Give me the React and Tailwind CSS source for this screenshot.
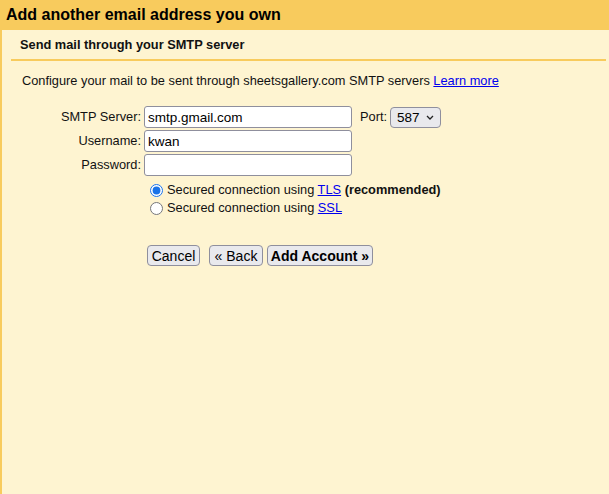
import React, { useState } from 'react';

function Field({ label, value, children }) {
  return (
    <div className="flex items-center h-[22px]">
      <label className="w-[131px] pr-[1px] text-right">{label}</label>
      <input
        type="text"
        defaultValue={value}
        className="ml-[2px] w-[208px] h-[22px] px-[3px] bg-white border border-[#8f8f9d] rounded-[3px] text-[13.5px] text-black outline-none"
      />
      {children}
    </div>
  );
}

export default function App() {
  const [secure, setSecure] = useState('tls');

  return (
    <div className="w-full h-[494px] bg-[#f8cb5d] pl-[2px] text-[12.8px] text-[#111] font-['Liberation_Sans',Arial,sans-serif] flex flex-col">
      <div className="h-[30px] -ml-[2px] pl-[6px] flex items-center text-[16px] font-bold text-black">
        Add another email address you own
      </div>

      <div className="flex-1 bg-[#fef4d1] pl-[9px] pr-[3px]">
        <div className="h-[31px] pl-[9px] flex items-center font-bold border-b-2 border-[#f8cb5d]">
          Send mail through your SMTP server
        </div>

        <p className="pl-[11px] mt-[12px] leading-[15px]">
          Configure your mail to be sent through sheetsgallery.com SMTP servers{' '}
          <a href="#" className="text-[#0000ee] underline">Learn more</a>
        </p>

        <div className="mt-[18px] flex flex-col gap-[2px]">
          <Field label="SMTP Server:" value="smtp.gmail.com">
            <span className="ml-[8px]">Port:</span>
            <div className="relative ml-[3px]">
              <select
                defaultValue="587"
                className="appearance-none w-[51px] h-[21px] pl-[6px] bg-[#e9e9ed] border border-[#8f8f9d] rounded-[4px] text-[13.5px] text-black outline-none"
              >
                <option>587</option>
                <option>465</option>
                <option>25</option>
              </select>
              <svg className="absolute right-[7px] top-[8px] pointer-events-none" width="8" height="5" viewBox="0 0 8 5">
                <path d="M1 1l3 3 3-3" fill="none" stroke="#222" strokeWidth="1.3" />
              </svg>
            </div>
          </Field>
          <Field label="Username:" value="kwan" />
          <Field label="Password:" value="" />
        </div>

        <div className="ml-[139px] mt-[5px] flex flex-col">
          <label className="flex items-center h-[18px]">
            <input
              type="radio"
              name="secure"
              checked={secure === 'tls'}
              onChange={() => setSecure('tls')}
              className="m-0 w-[13px] h-[13px] accent-[#1a73e8]"
            />
            <span className="ml-[4px]">
              Secured connection using <a href="#" className="text-[#0000ee] underline">TLS</a>{' '}
              <b>(recommended)</b>
            </span>
          </label>
          <label className="flex items-center h-[18px]">
            <input
              type="radio"
              name="secure"
              checked={secure === 'ssl'}
              onChange={() => setSecure('ssl')}
              className="m-0 w-[13px] h-[13px] accent-[#1a73e8]"
            />
            <span className="ml-[4px]">
              Secured connection using <a href="#" className="text-[#0000ee] underline">SSL</a>
            </span>
          </label>
        </div>

        <div className="ml-[136px] mt-[28px] flex items-center">
          <button className="h-[21px] w-[53px] bg-[#e9e9ed] border border-[#8f8f9d] rounded-[4px] text-[14px] text-black">
            Cancel
          </button>
          <button className="ml-[9px] h-[21px] w-[54px] bg-[#e9e9ed] border border-[#8f8f9d] rounded-[4px] text-[14px] text-black">
            « Back
          </button>
          <button className="ml-[4px] h-[21px] w-[106px] bg-[#e9e9ed] border border-[#8f8f9d] rounded-[4px] text-[14px] font-bold text-black">
            Add Account »
          </button>
        </div>
      </div>
    </div>
  );
}
